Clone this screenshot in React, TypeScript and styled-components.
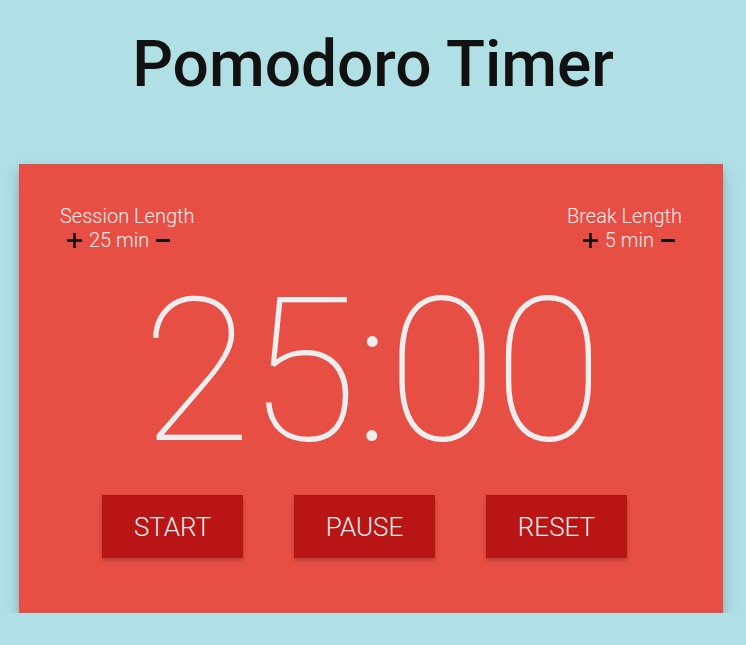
import styled, { createGlobalStyle } from "styled-components";

const GlobalStyle = createGlobalStyle`
  html, body {
    margin: 0;
    padding: 0;
    background: #b0dfe5;
    font-family: Roboto, "Liberation Sans", sans-serif;
  }
`;

const Page = styled.div`
  display: flex;
  flex-direction: column;
  align-items: center;
  padding-top: 21px;
`;

const Title = styled.h1`
  margin: 0;
  font-size: 64px;
  font-weight: 500;
  color: #111;
  line-height: 88px;
`;

const Card = styled.div`
  align-self: flex-start;
  margin: 55px 0 0 19px;
  width: 704px;
  box-sizing: border-box;
  background: #e74f45;
  box-shadow: 0 8px 16px rgba(0, 0, 0, 0.16), 0 4px 6px rgba(0, 0, 0, 0.12);
  padding: 40px 41px 55px;
  color: #eeeeee;
  display: flex;
  flex-direction: column;
`;

const Settings = styled.div`
  display: flex;
  justify-content: space-between;
`;

const Setting = styled.div<{ $align: "start" | "end" }>`
  display: flex;
  flex-direction: column;
  align-items: ${(p) => (p.$align === "start" ? "flex-start" : "flex-end")};
`;

const Label = styled.div`
  font-size: 20px;
  font-weight: 300;
  line-height: 24px;
`;

const Value = styled.div<{ $align: "start" | "end" }>`
  display: flex;
  align-items: center;
  gap: 7px;
  font-size: 20px;
  font-weight: 300;
  line-height: 24px;
  ${(p) => (p.$align === "start" ? "padding-left: 7px;" : "padding-right: 7px;")}
`;

const IconButton = styled.button`
  border: 0;
  background: none;
  padding: 0;
  display: flex;
  cursor: pointer;
`;

const Clock = styled.div`
  text-align: center;
  font-size: 200px;
  font-weight: 100;
  letter-spacing: -3px;
  line-height: 200px;
  margin-top: 20px;
`;

const Controls = styled.div`
  display: flex;
  justify-content: center;
  gap: 51px;
  margin-top: 23px;
  padding-right: 13px;
`;

const ControlButton = styled.button`
  width: 141px;
  height: 63px;
  border: 0;
  background: #b91515;
  color: #eeeeee;
  font-family: Roboto, "Liberation Sans", sans-serif;
  font-size: 26px;
  font-weight: 300;
  box-shadow: 0 2px 4px rgba(0, 0, 0, 0.25);
  cursor: pointer;
`;

function PlusIcon() {
  return (
    <svg width="15" height="15" viewBox="0 0 15 15">
      <rect x="0" y="6.25" width="15" height="2.6" fill="#111" />
      <rect x="6.2" y="0" width="2.6" height="15" fill="#111" />
    </svg>
  );
}

function MinusIcon() {
  return (
    <svg width="14" height="15" viewBox="0 0 14 15">
      <rect x="0" y="6" width="14" height="3" fill="#111" />
    </svg>
  );
}

function LengthSetting({
  label,
  minutes,
  align,
}: {
  label: string;
  minutes: number;
  align: "start" | "end";
}) {
  return (
    <Setting $align={align}>
      <Label>{label}</Label>
      <Value $align={align}>
        <IconButton>
          <PlusIcon />
        </IconButton>
        {minutes} min
        <IconButton>
          <MinusIcon />
        </IconButton>
      </Value>
    </Setting>
  );
}

export default function App() {
  return (
    <>
      <GlobalStyle />
      <Page>
        <Title>Pomodoro Timer</Title>
        <Card>
          <Settings>
            <LengthSetting label="Session Length" minutes={25} align="start" />
            <LengthSetting label="Break Length" minutes={5} align="end" />
          </Settings>
          <Clock>25:00</Clock>
          <Controls>
            <ControlButton>START</ControlButton>
            <ControlButton>PAUSE</ControlButton>
            <ControlButton>RESET</ControlButton>
          </Controls>
        </Card>
      </Page>
    </>
  );
}
